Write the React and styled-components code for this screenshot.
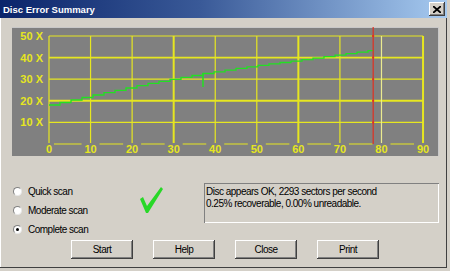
import React from "react"
import styled, { createGlobalStyle } from "styled-components"

const GlobalStyle = createGlobalStyle`
  html, body {
    margin: 0;
    padding: 0;
    background: #d4d0c8;
  }
  body {
    font-family: "Liberation Sans", Arial, sans-serif;
  }
`

const Window = styled.div`
  width: 450px;
  height: 271px;
  box-sizing: border-box;
  background: #d4d0c8;
  display: flex;
  flex-direction: column;
  border-right: 3px solid #d4d0c8;
  border-bottom: 3px solid #d4d0c8;
  box-shadow: inset -1px -1px #404040, inset 1px 0 #ffffff;
`

const TitleBar = styled.div`
  height: 18px;
  flex: none;
  display: flex;
  align-items: center;
  justify-content: space-between;
  padding: 0 2px 0 3px;
  background: linear-gradient(to right, #0a246a 0%, #3a5a98 45%, #a6caf0 100%);
`

const Title = styled.span`
  color: #ffffff;
  font-weight: bold;
  font-size: 9.5px;
`

const CloseBox = styled.div`
  width: 16px;
  height: 14px;
  box-sizing: border-box;
  background: #d4d0c8;
  display: flex;
  align-items: center;
  justify-content: center;
  box-shadow: inset -1px -1px #404040, inset 1px 1px #ffffff, inset -2px -2px #808080;
`

const Body = styled.div`
  flex: 1;
  display: flex;
  flex-direction: column;
  padding: 9px 8px 9px 12px;
`

const ChartPanel = styled.div`
  width: 427px;
  height: 129px;
  flex: none;
  background: #808080;
  box-shadow: inset 0 1px #c8c8c8, inset -1px 0 #c8c8c8;
`

const Lower = styled.div`
  display: flex;
  align-items: flex-start;
  margin-top: 27px;
`

const RadioGroup = styled.div`
  width: 128px;
  display: flex;
  flex-direction: column;
  gap: 8px;
  padding-top: 3px;
`

const RadioRow = styled.label`
  display: flex;
  align-items: center;
  gap: 6px;
  font-size: 10px;
  letter-spacing: -0.5px;
  color: #000;
  height: 11px;
  padding-left: 1px;
`

const RadioCircle = styled.span`
  width: 9px;
  height: 9px;
  box-sizing: border-box;
  border-radius: 50%;
  background: #ffffff;
  border: 1px solid #808080;
  border-right-color: #e8e8e8;
  border-bottom-color: #e8e8e8;
  display: flex;
  align-items: center;
  justify-content: center;
  &::after {
    content: "";
    width: 3px;
    height: 3px;
    border-radius: 50%;
    background: ${(p) => (p.$on ? "#000" : "transparent")};
  }
`

const CheckMark = styled.svg`
  margin-top: 4px;
  flex: none;
`

const StatusBox = styled.div`
  margin-left: auto;
  width: 235px;
  height: 40px;
  box-sizing: border-box;
  padding: 3px 2px;
  font-size: 10px;
  letter-spacing: -0.5px;
  line-height: 12px;
  color: #000;
  box-shadow: inset 1px 1px #808080, inset -1px -1px #ffffff;
`

const ButtonRow = styled.div`
  margin-top: auto;
  display: flex;
  justify-content: center;
  gap: 20px;
  padding-right: 1px;
`

const Button = styled.button`
  width: 62px;
  height: 19px;
  padding: 0;
  border: none;
  background: #d4d0c8;
  font-family: "Liberation Sans", Arial, sans-serif;
  font-size: 10px;
  letter-spacing: -0.5px;
  color: #000;
  box-shadow: inset -1px -1px #404040, inset 1px 1px #ffffff, inset -2px -2px #808080;
`

const X0 = 37
const DX = 41.56
const Y0 = 117
const DY = 2.16
const YEL = "#e6e620"
const GREEN = "#22e022"

const px = (v) => X0 + (v / 10) * DX
const py = (v) => Y0 - v * DY

// rough shape of the read-speed curve, panel coordinates
const curve = [
  [37, 78],
  [90, 66],
  [138, 56],
  [191, 46.5],
  [240, 39],
  [288, 33],
  [361, 23],
]

function curveY(x) {
  for (let i = 1; i < curve.length; i++) {
    const [x1, y1] = curve[i]
    const [x0, y0] = curve[i - 1]
    if (x <= x1) return y0 + ((x - x0) / (x1 - x0)) * (y1 - y0)
  }
  return curve[curve.length - 1][1]
}

function greenPath() {
  let d = `M ${X0} ${curveY(X0)}`
  const step = 11
  for (let x = X0 + step; x <= 361; x += step) {
    d += ` H ${x} V ${curveY(x).toFixed(1)}`
  }
  d += ` H 361 V 23`
  return d
}

function Chart() {
  const yVals = [10, 20, 30, 40, 50]
  const xVals = [0, 10, 20, 30, 40, 50, 60, 70, 80, 90]
  const thickY = { 20: 2, 40: 1.6 }
  const thickX = { 30: 2, 60: 2, 90: 2 }
  return (
    <svg width="427" height="129" viewBox="0 0 427 129">
      {yVals.map((v) => (
        <line key={"h" + v} x1={X0} x2={px(90)} y1={py(v)} y2={py(v)} stroke={YEL} strokeWidth={thickY[v] || 1.2} />
      ))}
      {xVals.map((v) => (
        <line key={"v" + v} x1={px(v)} x2={px(v)} y1={py(50)} y2={Y0} stroke={v === 80 ? "#eaea90" : YEL} strokeWidth={thickX[v] || 1.2} />
      ))}
      <line x1={X0} x2={px(90)} y1={Y0} y2={Y0} stroke={YEL} strokeWidth="1.2" />
      {yVals.map((v) => (
        <text key={"yl" + v} x="31" y={py(v) + 4} textAnchor="end" fill={YEL} fontFamily="Liberation Sans, Arial, sans-serif" fontWeight="bold" fontSize="11">
          {v} X
        </text>
      ))}
      {xVals.map((v) => (
        <g key={"xl" + v}>
          <rect x={px(v) - (v === 0 ? 5 : 9)} y={Y0 - 1} width={v === 0 ? 10 : 18} height="11" fill="#808080" />
          <text x={px(v)} y={Y0 + 9} textAnchor="middle" fill={YEL} fontFamily="Liberation Sans, Arial, sans-serif" fontWeight="bold" fontSize="11">
            {v}
          </text>
        </g>
      ))}
      <path d={greenPath()} fill="none" stroke={GREEN} strokeWidth="1.3" />
      <line x1="191" x2="191" y1="46" y2="60" stroke={GREEN} strokeWidth="1.5" />
      <line x1={px(78)} x2={px(78)} y1="0" y2={Y0} stroke="#e03020" strokeWidth="1.2" />
      {yVals.map((v) => (
        <rect key={"rt" + v} x={px(78) - 1} y={py(v) - 1} width="2" height="2" fill="#e03020" />
      ))}
    </svg>
  )
}

export default function App() {
  const scans = [
    { label: "Quick scan", on: false },
    { label: "Moderate scan", on: false },
    { label: "Complete scan", on: true },
  ]
  return (
    <>
      <GlobalStyle />
      <Window>
        <TitleBar>
          <Title>Disc Error Summary</Title>
          <CloseBox>
            <svg width="8" height="7" viewBox="0 0 8 7">
              <path d="M0 0 L8 7 M8 0 L0 7" stroke="#000" strokeWidth="1.8" />
            </svg>
          </CloseBox>
        </TitleBar>
        <Body>
          <ChartPanel>
            <Chart />
          </ChartPanel>
          <Lower>
            <RadioGroup>
              {scans.map((s) => (
                <RadioRow key={s.label}>
                  <RadioCircle $on={s.on} />
                  {s.label}
                </RadioRow>
              ))}
            </RadioGroup>
            <CheckMark width="24" height="27" viewBox="0 0 24 27">
              <path d="M0 12 L3 10 L7 19 L21 0 L23 2 L8 26 L6 26 Z" fill="#28d828" />
            </CheckMark>
            <StatusBox>
              Disc appears OK, 2293 sectors per second
              <br />
              0.25% recoverable, 0.00% unreadable.
            </StatusBox>
          </Lower>
          <ButtonRow>
            <Button>Start</Button>
            <Button>Help</Button>
            <Button>Close</Button>
            <Button>Print</Button>
          </ButtonRow>
        </Body>
      </Window>
    </>
  )
}
